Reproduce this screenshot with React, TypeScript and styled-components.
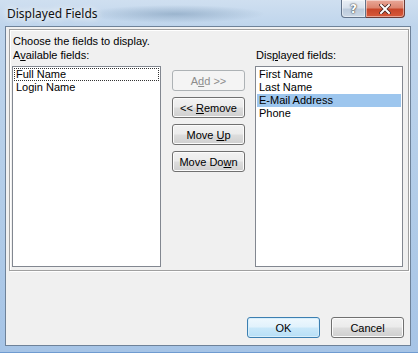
import styled, { createGlobalStyle } from "styled-components";

const GlobalStyle = createGlobalStyle`
  html, body {
    margin: 0;
    padding: 0;
  }
  body {
    width: 418px;
    height: 353px;
    overflow: hidden;
    font-family: "Liberation Sans", Arial, sans-serif;
    font-size: 11px;
    color: #000;
  }
`;

const available = ["Full Name", "Login Name"];
const displayed = ["First Name", "Last Name", "E-Mail Address", "Phone"];

const Window = styled.div`
  box-sizing: border-box;
  width: 418px;
  height: 353px;
  display: flex;
  flex-direction: column;
  background:
    radial-gradient(ellipse 90px 9px at 175px 14px, rgba(120, 150, 180, 0.55), rgba(120, 150, 180, 0) 100%),
    linear-gradient(180deg, #cfdff0 0px, #bfd5ec 26px, #b2cce8 200px, #a6c4e6 100%);
  border-bottom: 1px solid #6f9bd0;
`;

const TitleBar = styled.div`
  height: 26px;
  display: flex;
  align-items: flex-start;
  flex-shrink: 0;
`;

const Title = styled.div`
  margin: 7px 0 0 7px;
  font-family: "Noto Sans", "Open Sans", sans-serif;
  font-size: 12px;
  line-height: 14px;
  color: #111;
  text-shadow: 0 0 6px #fff, 0 0 10px #fff;
`;

const CaptionButtons = styled.div`
  margin-left: auto;
  margin-right: 13px;
  display: flex;
`;

const CaptionButton = styled.div<{ $close?: boolean }>`
  box-sizing: border-box;
  height: 18px;
  width: ${(p) => (p.$close ? "39px" : "25px")};
  display: flex;
  align-items: center;
  justify-content: center;
  border: 1px solid ${(p) => (p.$close ? "#6b3a36" : "#62738a")};
  border-top: none;
  ${(p) => (p.$close ? "border-left: none;" : "")}
  border-radius: ${(p) => (p.$close ? "0 0 4px 0" : "0 0 0 4px")};
  background: ${(p) =>
    p.$close
      ? "linear-gradient(180deg, #e9a899 0%, #dc8570 45%, #c8462a 55%, #d7593a 100%)"
      : "linear-gradient(180deg, #e9eff6 0%, #d8e1ec 45%, #bccbdc 55%, #cbd7e5 100%)"};
  box-shadow: inset 0 0 0 1px rgba(255, 255, 255, 0.45);
  font-family: "DejaVu Sans", sans-serif;
  font-weight: bold;
  font-size: 12px;
  color: #fff;
  text-shadow: 0 0 1px #333, 0 0 2px #333;
`;

const Client = styled.div`
  flex: 1;
  margin: 0 7px 6px 5px;
  border: 1px solid #6e8299;
  background: #f0f0f0;
  display: flex;
  flex-direction: column;
`;

const Panel = styled.div`
  height: 242px;
  box-sizing: border-box;
  margin: 2px 1px 0 3px;
  border: 1px solid #a0a0a0;
  box-shadow: 1px 1px 0 #fff, inset 1px 1px 0 #fff;
  padding: 5px 4px 2px 2px;
  display: grid;
  grid-template-columns: 149px 94px 148px;
  grid-template-rows: 14px 17px 201px;
`;

const Intro = styled.div`
  grid-column: 1 / 4;
  line-height: 13px;
  padding-left: 1px;
`;

const Label = styled.div<{ $col: number }>`
  grid-column: ${(p) => p.$col};
  line-height: 13px;
  padding-left: 1px;
`;

const Key = styled.span`
  text-decoration: underline;
`;

const ListBox = styled.div<{ $col: number }>`
  grid-column: ${(p) => p.$col};
  box-sizing: border-box;
  background: #fff;
  border: 1px solid #828790;
  padding: 1px;
`;

const Item = styled.div<{ $selected?: boolean; $focus?: boolean }>`
  height: 13px;
  line-height: 13px;
  padding-left: 2px;
  box-sizing: border-box;
  background: ${(p) => (p.$selected ? "#9dc6ee" : "transparent")};
  outline: ${(p) => (p.$focus ? "1px dotted #333" : "none")};
  outline-offset: -1px;
  white-space: nowrap;
`;

const ButtonColumn = styled.div`
  grid-column: 2;
  display: flex;
  flex-direction: column;
  gap: 6px;
  padding: 4px 0 0 11px;
`;

const Button = styled.button<{ $default?: boolean }>`
  box-sizing: border-box;
  width: 73px;
  height: 21px;
  padding: 0;
  border-radius: 3px;
  font-family: "Liberation Sans", Arial, sans-serif;
  font-size: 11px;
  color: #000;
  border: 1px solid ${(p) => (p.$default ? "#3c7fb1" : "#707070")};
  background: ${(p) =>
    p.$default
      ? "linear-gradient(180deg, #eef8fe 0%, #e1f2fc 48%, #c9e8fa 52%, #b7dff6 100%)"
      : "linear-gradient(180deg, #f2f2f2 0%, #ebebeb 48%, #dddddd 52%, #cfcfcf 100%)"};
  box-shadow: inset 0 0 0 1px ${(p) => (p.$default ? "#d7eefb" : "#fbfbfb")};

  &:disabled {
    border-color: #adb2b5;
    background: #f4f4f4;
    color: #8d8d8d;
    box-shadow: none;
  }
`;

const Footer = styled.div`
  margin-top: auto;
  display: flex;
  justify-content: flex-end;
  gap: 11px;
  padding: 0 6px 7px 0;
`;

export default function App() {
  return (
    <>
      <GlobalStyle />
      <Window>
        <TitleBar>
          <Title>Displayed Fields</Title>
          <CaptionButtons>
            <CaptionButton>?</CaptionButton>
            <CaptionButton $close>
              <svg width="12" height="10" viewBox="0 0 12 10">
                <path d="M2 1 L10 9 M10 1 L2 9" stroke="#4a2520" strokeWidth="3.6" strokeLinecap="square" />
                <path d="M2 1 L10 9 M10 1 L2 9" stroke="#fff" strokeWidth="2" strokeLinecap="square" />
              </svg>
            </CaptionButton>
          </CaptionButtons>
        </TitleBar>
        <Client>
          <Panel>
            <Intro>Choose the fields to display.</Intro>
            <Label $col={1}>
              A<Key>v</Key>ailable fields:
            </Label>
            <Label $col={3}>
              Dis<Key>p</Key>layed fields:
            </Label>
            <ListBox $col={1}>
              {available.map((name, i) => (
                <Item key={name} $focus={i === 0}>
                  {name}
                </Item>
              ))}
            </ListBox>
            <ButtonColumn>
              <Button disabled>
                A<Key>d</Key>d &gt;&gt;
              </Button>
              <Button>
                &lt;&lt; <Key>R</Key>emove
              </Button>
              <Button>
                Move <Key>U</Key>p
              </Button>
              <Button>
                Move Do<Key>w</Key>n
              </Button>
            </ButtonColumn>
            <ListBox $col={3}>
              {displayed.map((name) => (
                <Item key={name} $selected={name === "E-Mail Address"}>
                  {name}
                </Item>
              ))}
            </ListBox>
          </Panel>
          <Footer>
            <Button $default>OK</Button>
            <Button>Cancel</Button>
          </Footer>
        </Client>
      </Window>
    </>
  );
}
